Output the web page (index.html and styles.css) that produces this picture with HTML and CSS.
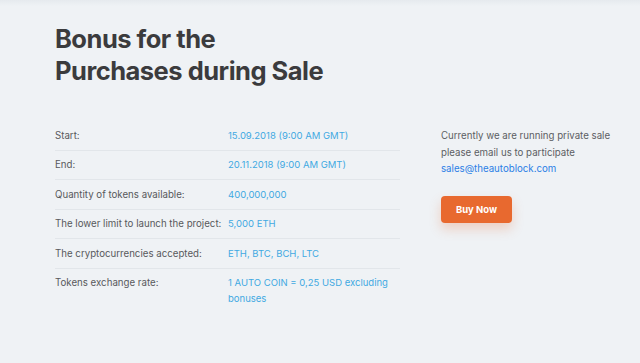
FILE: index.html
```html
<!DOCTYPE html>
<html lang="en">

<head>
    <meta charset="UTF-8">
    <meta name="viewport" content="width=device-width, initial-scale=1.0">
    <title>Bonus for the Purchases during Sale</title>
    <link rel="stylesheet" href="styles.css">
</head>

<body>
    <div class="page">
        <h1 class="title">Bonus for the<br>Purchases during Sale</h1>

        <div class="content">
            <div class="table">
                <div class="row">
                    <div class="label">Start:</div>
                    <div class="value">15.09.2018 (9:00 AM GMT)</div>
                </div>
                <div class="row">
                    <div class="label">End:</div>
                    <div class="value">20.11.2018 (9:00 AM GMT)</div>
                </div>
                <div class="row">
                    <div class="label">Quantity of tokens available:</div>
                    <div class="value">400,000,000</div>
                </div>
                <div class="row">
                    <div class="label">The lower limit to launch the project:</div>
                    <div class="value">5,000 ETH</div>
                </div>
                <div class="row">
                    <div class="label">The cryptocurrencies accepted:</div>
                    <div class="value">ETH, BTC, BCH, LTC</div>
                </div>
                <div class="row last">
                    <div class="label">Tokens exchange rate:</div>
                    <div class="value">1 AUTO COIN = 0,25 USD excluding bonuses</div>
                </div>
            </div>

            <div class="side">
                <p class="note">Currently we are running private sale please email us to participate
                    <a href="#" class="email">sales@theautoblock.com</a></p>
                <button class="buy">Buy Now</button>
            </div>
        </div>
    </div>
</body>

</html>
```

FILE: styles.css
```css
body {
    padding: 0px;
    margin: 0px;
    background-color: #eff2f5;
    font-family: Inter, "Noto Sans", sans-serif;
}

.page {
    min-height: 363px;
    box-sizing: border-box;
    padding: 23px 0 0 55px;
    background: linear-gradient(#e6eaee, #eff2f5 6px);
}

.title {
    margin: 0;
    font-size: 25.5px;
    line-height: 32px;
    font-weight: 700;
    letter-spacing: -0.5px;
    color: #3b3b3d;
}

.content {
    display: flex;
    margin-top: 34px;
}

.table {
    width: 345px;
}

.row {
    display: flex;
    padding: 6.5px 0 6.5px 0;
    border-bottom: 1px solid #e2e6ea;
    font-size: 9.5px;
    line-height: 15.5px;
}

.row.last {
    border-bottom: none;
}

.label {
    width: 173px;
    flex-shrink: 0;
    white-space: nowrap;
    color: #58595c;
    font-size: 9.7px;
}

.value {
    color: #3fa9e2;
}

.side {
    margin-left: 41px;
    width: 180px;
}

.note {
    margin: 7px 0 0 0;
    font-size: 9.7px;
    line-height: 16.5px;
    color: #5c5e63;
}

.email {
    display: block;
    color: #2b7fe6;
    text-decoration: none;
}

.buy {
    margin-top: 18px;
    width: 71px;
    height: 27px;
    border: none;
    border-radius: 4px;
    background-color: #e8692f;
    color: white;
    font-family: inherit;
    font-weight: 700;
    font-size: 9.5px;
    box-shadow: 0 6px 12px rgba(232, 105, 47, 0.25);
}
```
